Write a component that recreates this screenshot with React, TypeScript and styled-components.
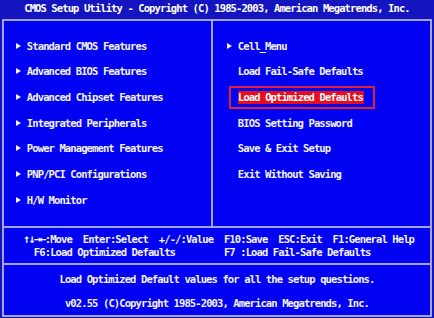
import styled, { createGlobalStyle } from "styled-components";

type MenuItem = {
  label: string;
  submenu?: boolean;
  selected?: boolean;
};

const leftMenu: MenuItem[] = [
  { label: "Standard CMOS Features", submenu: true },
  { label: "Advanced BIOS Features", submenu: true },
  { label: "Advanced Chipset Features", submenu: true },
  { label: "Integrated Peripherals", submenu: true },
  { label: "Power Management Features", submenu: true },
  { label: "PNP/PCI Configurations", submenu: true },
  { label: "H/W Monitor", submenu: true },
];

const rightMenu: MenuItem[] = [
  { label: "Cell_Menu", submenu: true },
  { label: "Load Fail-Safe Defaults" },
  { label: "Load Optimized Defaults", selected: true },
  { label: "BIOS Setting Password" },
  { label: "Save & Exit Setup" },
  { label: "Exit Without Saving" },
];

// one BIOS text cell, 640px screen shrunk to 434px
const CELL = 5.43;
const FONT = 10.5;

const GlobalStyle = createGlobalStyle`
  html, body {
    margin: 0;
    padding: 0;
    background: #1414c0;
  }
`;

const Screen = styled.div`
  width: 434px;
  height: 318px;
  background: #1414c0;
  color: #f2f2f8;
  font-family: "DejaVu Sans Mono", "Liberation Mono", monospace;
  font-weight: bold;
  font-size: ${FONT}px;
  letter-spacing: ${CELL - FONT * 0.602}px;
  display: flex;
  flex-direction: column;
  overflow: hidden;
`;

const TitleBar = styled.div`
  height: 19px;
  line-height: 17px;
  text-align: center;
  white-space: pre;
  color: #ffffff;
`;

const Frame = styled.div`
  margin: 0 2px;
  height: 298px;
  box-sizing: border-box;
  border: 2px solid #a4a4e4;
  background: #0202f2;
  display: flex;
  flex-direction: column;
`;

const MenuArea = styled.div`
  height: 205px;
  border-bottom: 2px solid #a4a4e4;
  display: grid;
  grid-template-columns: 209px 1fr;
`;

const Column = styled.div<{ $left?: boolean }>`
  padding-top: 12px;
  padding-left: ${(p) => (p.$left ? 12 : 14)}px;
  border-right: ${(p) => (p.$left ? "2px solid #a4a4e4" : "none")};
  display: flex;
  flex-direction: column;
`;

const Row = styled.div`
  height: 25.67px;
  display: flex;
  align-items: center;
  white-space: pre;
`;

const ArrowSlot = styled.span`
  width: ${CELL * 2}px;
  flex: none;
  display: flex;
  align-items: center;
`;

const Arrow = styled.span`
  width: 0;
  height: 0;
  border-left: 5px solid #f2f2f8;
  border-top: 3px solid transparent;
  border-bottom: 3px solid transparent;
`;

const HighlightBox = styled.span`
  margin-left: -${CELL * 2 - 2}px;
  border: 2px solid #e3203c;
  padding: 3px 9px 3px 7px;
  display: flex;
`;

const Selected = styled.span`
  background: #e80c1c;
  color: #ffffff;
  line-height: 13px;
  padding-right: 1px;
`;

const KeyArea = styled.div`
  padding: 5px 0 4px 19px;
  line-height: 13px;
  white-space: pre;
  border-bottom: 2px solid #a4a4e4;
`;

const KeyArrows = styled.span`
  font-size: 12px;
  letter-spacing: ${CELL - 12 * 0.602}px;
`;

const HelpArea = styled.div`
  padding: 8px 0 5px;
  display: flex;
  flex-direction: column;
  gap: 11px;
  line-height: 13px;
  text-align: center;
  white-space: pre;
`;

function MenuRow({ item }: { item: MenuItem }) {
  return (
    <Row>
      <ArrowSlot>{item.submenu ? <Arrow /> : null}</ArrowSlot>
      {item.selected ? (
        <HighlightBox>
          <Selected>{item.label}</Selected>
        </HighlightBox>
      ) : (
        item.label
      )}
    </Row>
  );
}

export default function App() {
  return (
    <>
      <GlobalStyle />
      <Screen>
        <TitleBar>
          CMOS Setup Utility - Copyright (C) 1985-2003, American Megatrends, Inc.
        </TitleBar>
        <Frame>
          <MenuArea>
            <Column $left>
              {leftMenu.map((item) => (
                <MenuRow key={item.label} item={item} />
              ))}
            </Column>
            <Column>
              {rightMenu.map((item) => (
                <MenuRow key={item.label} item={item} />
              ))}
            </Column>
          </MenuArea>
          <KeyArea>
            <div>
              <KeyArrows>↑↓→←</KeyArrows>
              {":Move  Enter:Select  +/-/:Value  F10:Save  ESC:Exit  F1:General Help"}
            </div>
            <div>{"  F6:Load Optimized Defaults         F7 :Load Fail-Safe Defaults"}</div>
          </KeyArea>
          <HelpArea>
            <div>Load Optimized Default values for all the setup questions.</div>
            <div>v02.55 (C)Copyright 1985-2003, American Megatrends, Inc.</div>
          </HelpArea>
        </Frame>
      </Screen>
    </>
  );
}
